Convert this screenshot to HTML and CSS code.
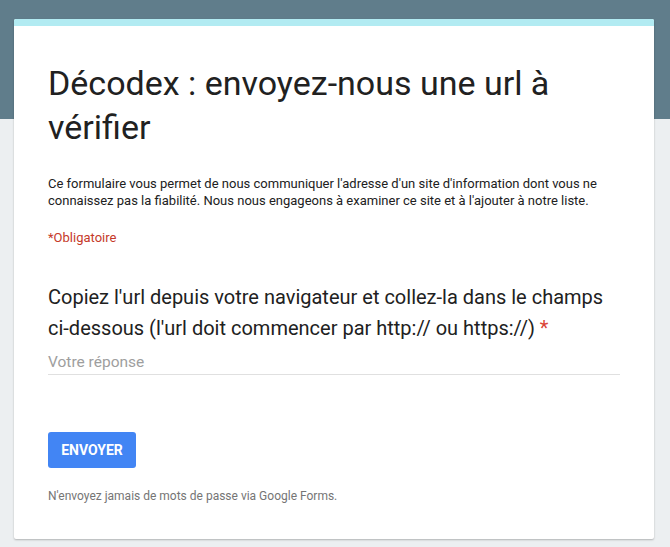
FILE: index.html
```
<!DOCTYPE html>
<html lang="fr">
<head>
<meta charset="utf-8">
<title>Décodex</title>
<link rel="stylesheet" href="styles.css">
</head>
<body>
<div class="page">
  <div class="card">
    <div class="stripe"></div>
    <div class="header">
      <h1 class="title">Décodex : envoyez-nous une url à vérifier</h1>
      <p class="desc">Ce formulaire vous permet de nous communiquer l'adresse d'un site d'information dont vous ne connaissez pas la fiabilité. Nous nous engageons à examiner ce site et à l'ajouter à notre liste.</p>
      <p class="required">*Obligatoire</p>
    </div>
    <div class="question">
      <div class="q-title">Copiez l'url depuis votre navigateur et collez-la dans le champs ci-dessous (l'url doit commencer par http:// ou https://)&nbsp;<span class="star">*</span></div>
      <div class="answer">Votre réponse</div>
    </div>
    <div class="actions">
      <button class="submit">ENVOYER</button>
    </div>
    <p class="footer">N'envoyez jamais de mots de passe via Google Forms.</p>
  </div>
</div>
</body>
</html>
```
FILE: styles.css
```
html, body {
  margin: 0;
  padding: 0;
}
body {
  background: linear-gradient(#607d8b 0, #607d8b 119px, #eceff1 119px);
  background-color: #eceff1;
  font-family: Roboto, "Noto Sans", sans-serif;
  height: 547px;
  overflow: hidden;
}
.page {
  padding: 19px 0 0 14px;
}
.card {
  width: 640px;
  background: #fff;
  border-radius: 2px;
  box-shadow: 0 1px 2px rgba(0,0,0,0.25);
  padding-bottom: 36px;
}
.stripe {
  height: 7px;
  background: #b2ebf2;
  border-radius: 2px 2px 0 0;
}
.header {
  padding: 35px 34px 0 34px;
}
.title {
  margin: 0;
  font-weight: 400;
  font-size: 34px;
  line-height: 44px;
  color: #212121;
}
.desc {
  margin: 26px 0 0;
  font-size: 13px;
  line-height: 17px;
  color: #212121;
}
.required {
  margin: 20px 0 0;
  font-size: 13px;
  line-height: 17px;
  color: #c53929;
}
.question {
  padding: 36px 34px 0 34px;
}
.q-title {
  font-size: 20px;
  line-height: 31px;
  color: #212121;
}
.star {
  color: #db4437;
}
.answer {
  margin-top: 8px;
  width: 572px;
  font-size: 15.5px;
  line-height: 20px;
  color: #9e9e9e;
  border-bottom: 1px solid #e0e0e0;
  padding-bottom: 2px;
}
.actions {
  padding: 57px 34px 0 34px;
}
.submit {
  display: block;
  width: 88px;
  height: 36px;
  background: #4285f4;
  border: none;
  border-radius: 3px;
  color: #fff;
  font-family: Roboto, sans-serif;
  font-weight: 700;
  font-size: 14px;
  padding: 0;
}
.footer {
  margin: 21px 34px 0;
  font-size: 12px;
  line-height: 14px;
  color: #757575;
}
```
